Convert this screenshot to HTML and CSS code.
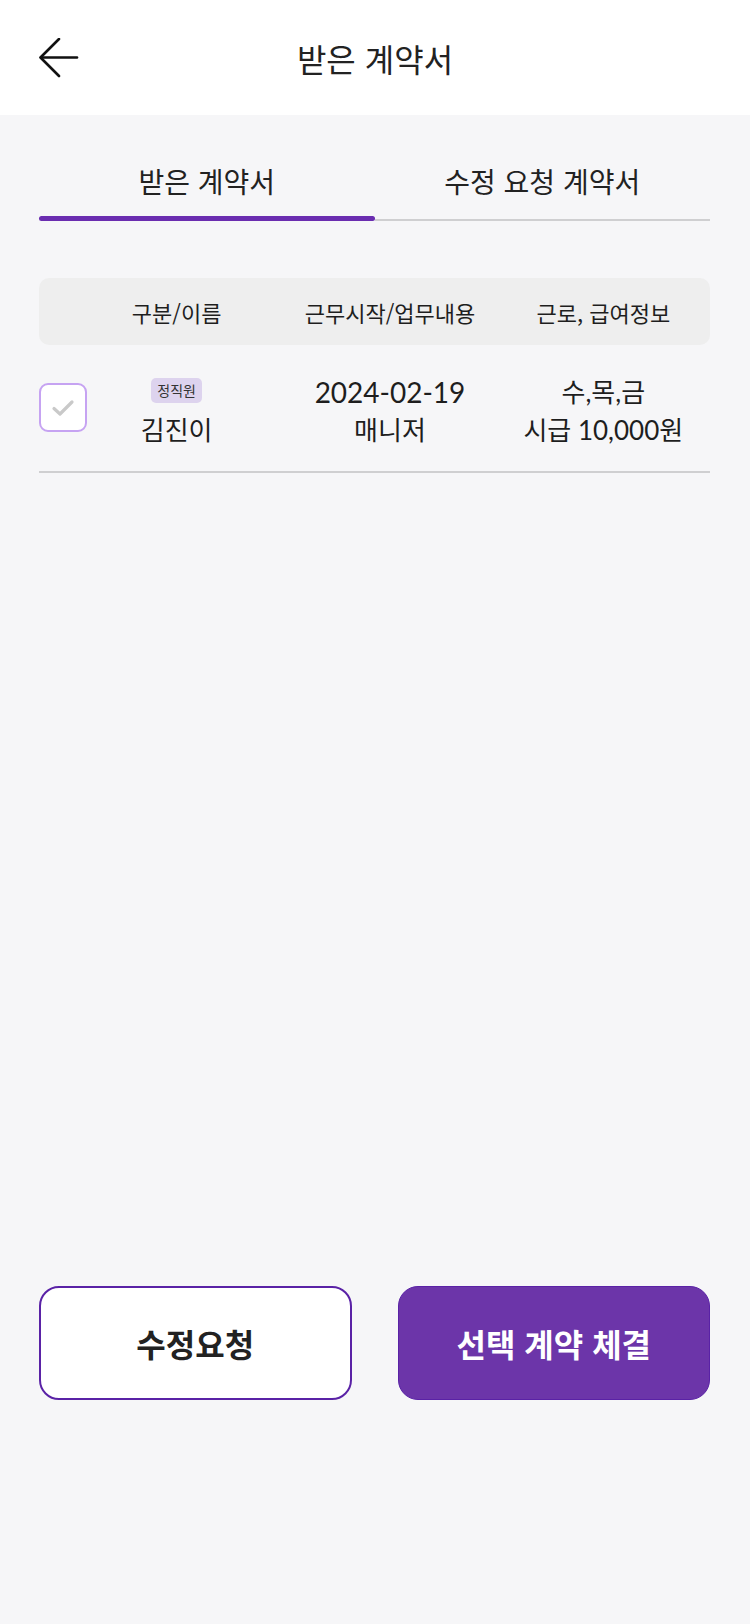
FILE: index.html
```html
<!DOCTYPE html>
<html lang="ko">
<head>
<meta charset="utf-8">
<title>받은 계약서</title>
<link rel="stylesheet" href="styles.css">
</head>
<body>
<div class="page">
  <header class="topbar">
    <button class="back" aria-label="뒤로">
      <svg width="40" height="40" viewBox="0 0 40 40" fill="none" stroke="#111" stroke-width="2.6" stroke-linecap="round" stroke-linejoin="round">
        <path d="M38 19.5H2"/>
        <path d="M20 1L1.5 19.5L20 38"/>
      </svg>
    </button>
    <h1 class="title">받은 계약서</h1>
    <span class="spacer"></span>
  </header>

  <main class="content">
    <nav class="tabs">
      <div class="tab active">
        <span class="tab-label">받은 계약서</span>
        <span class="tab-line"></span>
      </div>
      <div class="tab">
        <span class="tab-label">수정 요청 계약서</span>
        <span class="tab-line"></span>
      </div>
    </nav>

    <div class="table-head">
      <span></span>
      <span class="th">구분/이름</span>
      <span class="th">근무시작/업무내용</span>
      <span class="th">근로, 급여정보</span>
    </div>

    <div class="row">
      <span class="check">
        <svg width="24" height="24" viewBox="0 0 24 24" fill="none" stroke="#c9c9c9" stroke-width="3.2" stroke-linecap="round" stroke-linejoin="round">
          <path d="M3 12.5L9 18L21 6"/>
        </svg>
      </span>
      <div class="cell name-cell">
        <span class="badge">정직원</span>
        <span class="line">김진이</span>
      </div>
      <div class="cell">
        <span class="line num">2024-02-19</span>
        <span class="line">매니저</span>
      </div>
      <div class="cell">
        <span class="line">수,목,금</span>
        <span class="line">시급 10,000원</span>
      </div>
    </div>
  </main>

  <footer class="actions">
    <button class="btn btn-outline">수정요청</button>
    <button class="btn btn-primary">선택 계약 체결</button>
  </footer>
</div>
</body>
</html>
```

FILE: styles.css
```css
* {
  box-sizing: border-box;
}

html, body {
  margin: 0;
  padding: 0;
}

body {
  background: #f6f6f8;
  font-family: Lato, "Noto Sans CJK KR", sans-serif;
  color: #222222;
}

.page {
  min-height: 1624px;
  display: flex;
  flex-direction: column;
}

/* Header */
.topbar {
  height: 115px;
  background: #ffffff;
  display: grid;
  grid-template-columns: 1fr auto 1fr;
  align-items: center;
  padding: 0 39px;
}

.back {
  width: 40px;
  height: 40px;
  padding: 0;
  border: 0;
  background: none;
  display: flex;
  margin-top: 1px;
}

.title {
  margin: 0;
  font-family: "Noto Sans CJK KR", sans-serif;
  font-size: 32px;
  font-weight: 400;
  line-height: 40px;
  color: #222222;
}

/* Content */
.content {
  flex: 1;
  padding: 0 40px 0 39px;
  display: flex;
  flex-direction: column;
}

.tabs {
  display: grid;
  grid-template-columns: 1fr 1fr;
  align-items: end;
  margin-top: 46px;
}

.tab {
  display: flex;
  flex-direction: column;
  align-items: center;
}

.tab-label {
  font-family: "Noto Sans CJK KR", sans-serif;
  font-size: 28px;
  line-height: 40px;
  color: #222222;
  margin-bottom: 18px;
}

.tab-line {
  align-self: stretch;
  height: 2px;
  background: #cfcfd1;
}

.tab.active .tab-label {
  margin-bottom: 15px;
}

.tab.active .tab-line {
  height: 5px;
  border-radius: 3px;
  background: #6a2db0;
}

.table-head {
  margin-top: 57px;
  height: 67px;
  border-radius: 10px;
  background: #eeeeee;
  display: grid;
  grid-template-columns: 31px repeat(3, 1fr);
  align-items: center;
}

.th {
  text-align: center;
  font-family: "Noto Sans CJK KR", sans-serif;
  font-size: 22px;
  line-height: 30px;
  color: #1e1e1e;
}

.row {
  display: grid;
  grid-template-columns: 31px repeat(3, 1fr);
  padding: 28px 0 22px;
  border-bottom: 2px solid #cfcfd1;
}

.check {
  align-self: start;
  margin-top: 10px;
  width: 48px;
  height: 49px;
  border: 2px solid #c6a3f2;
  border-radius: 9px;
  background: #ffffff;
  display: flex;
  align-items: center;
  justify-content: center;
}

.cell {
  display: flex;
  flex-direction: column;
  align-items: center;
  align-self: end;
}

.line {
  font-size: 26px;
  line-height: 38px;
  color: #1e1e1e;
  white-space: nowrap;
}

.line.num {
  font-size: 28px;
}

.badge {
  font-family: "Noto Sans CJK KR", sans-serif;
  font-size: 14px;
  line-height: 25px;
  height: 25px;
  padding: 0 6px;
  border-radius: 5px;
  background: #ddd3ee;
  color: #333333;
  margin-bottom: 8px;
}

/* Actions */
.actions {
  display: grid;
  grid-template-columns: 1fr 1fr;
  gap: 46px;
  padding: 0 40px 224px 39px;
}

.btn {
  height: 114px;
  border-radius: 20px;
  font-family: "Noto Sans CJK KR", sans-serif;
  font-size: 32px;
  font-weight: 700;
  cursor: pointer;
}

.btn-outline {
  background: #ffffff;
  border: 2px solid #5a22a6;
  color: #222222;
}

.btn-primary {
  background: #6c35a9;
  border: 1px solid #5a22a6;
  color: #ffffff;
}
```
